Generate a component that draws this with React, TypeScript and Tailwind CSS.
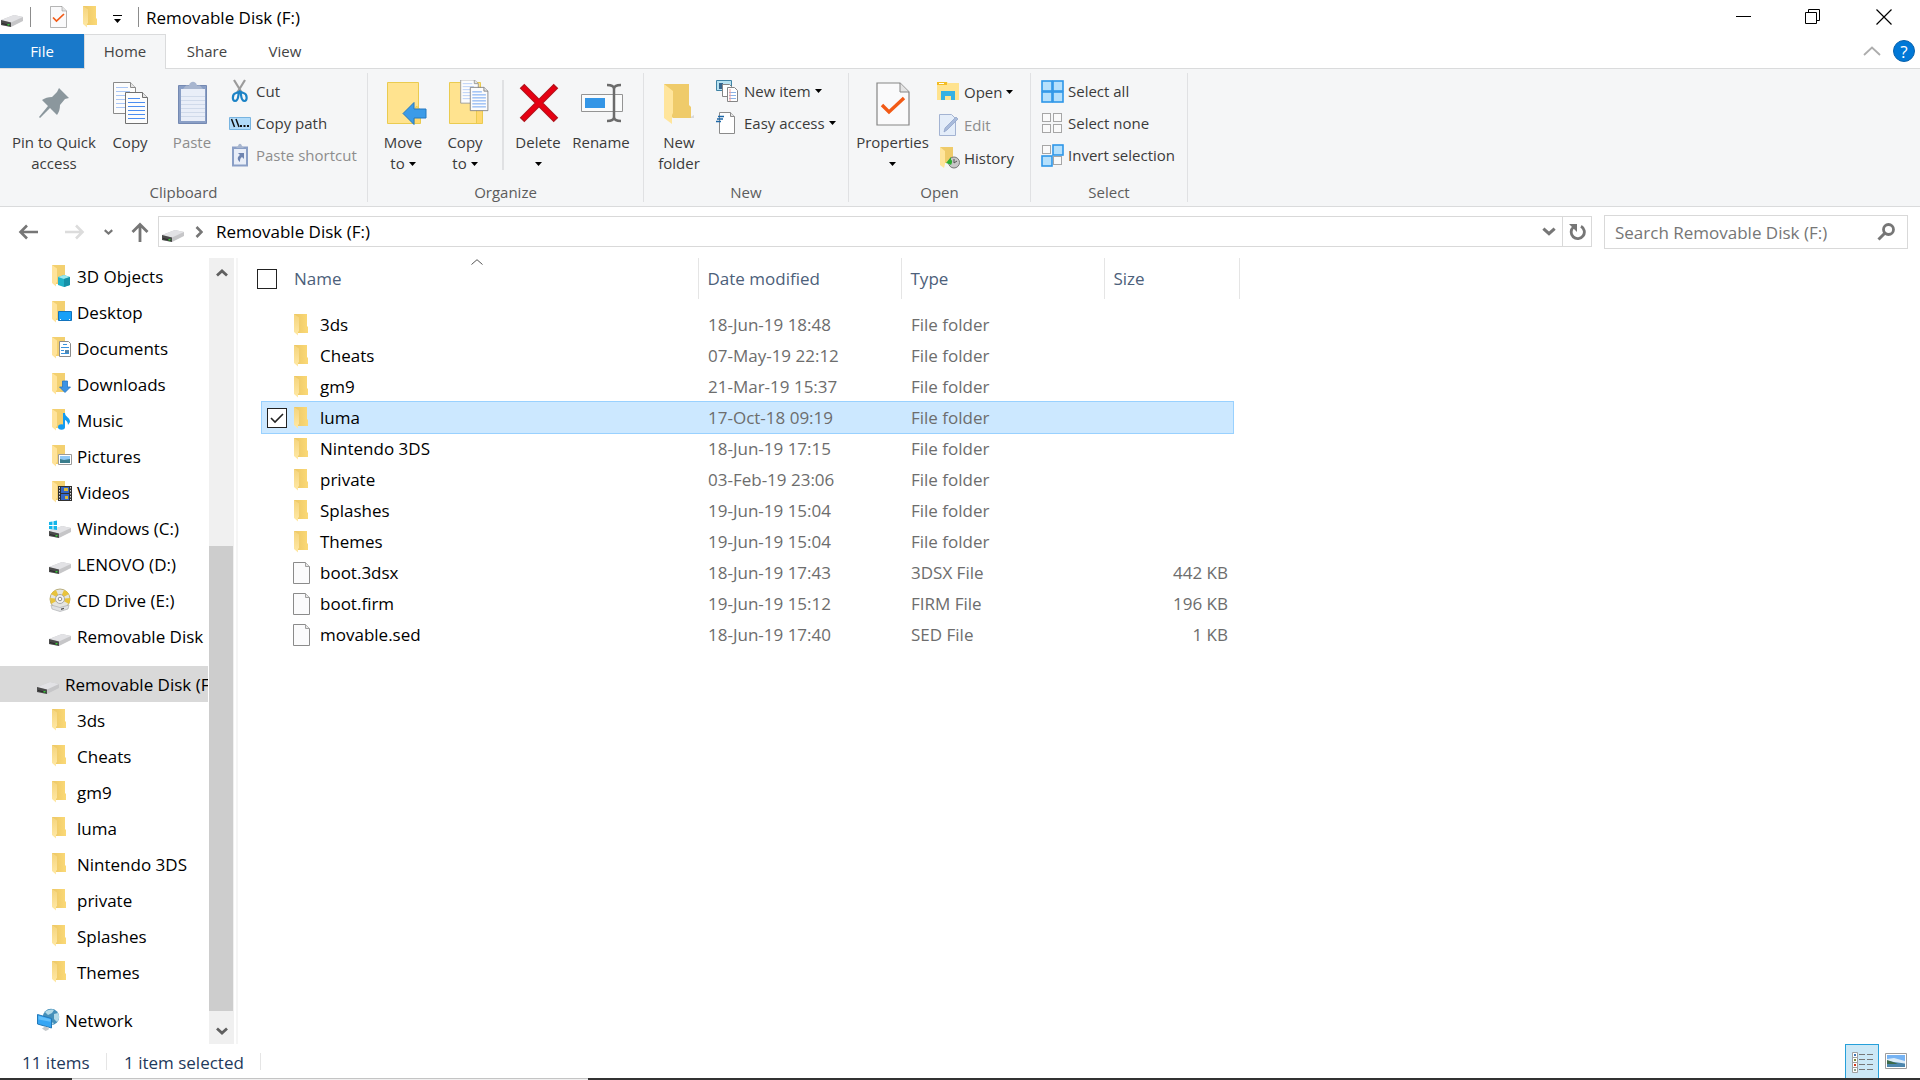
import type { ReactNode } from 'react';
import clsx from 'clsx';

type IconProps = { className?: string };

const FolderIcon = ({ className = 'h-[22px] w-4' }: IconProps) => (
  <svg viewBox="0 0 16 22" className={className} aria-hidden="true">
    <defs>
      <linearGradient id="folderBack" x1="0" x2="1">
        <stop offset="0" stopColor="#ecc765" />
        <stop offset="1" stopColor="#fbd977" />
      </linearGradient>
      <linearGradient id="folderFront" x1="0" x2="0" y1="0" y2="1">
        <stop offset="0" stopColor="#f5d47c" />
        <stop offset="1" stopColor="#ffe9a6" />
      </linearGradient>
    </defs>
    <path d="M1 0h13v12l1 1v6H5L1 15z" fill="url(#folderBack)" />
    <path d="M1 0l5 3.500V17l-1 1v3.500L1 18z" fill="url(#folderFront)" />
  </svg>
);

const FileIcon = ({ className = 'h-6 w-[18px]' }: IconProps) => (
  <svg viewBox="0 0 18 24" className={className} aria-hidden="true">
    <path d="M.5 1.500h12l4 4V22.500H.5z" fill="#fbfbfc" stroke="#8b8b8b" />
    <path d="M12.500 1.500v4h4" fill="#e6e6e6" stroke="#a0a0a0" />
  </svg>
);

const DriveShape = () => (
  <>
    <path d="M0 15l13-5 9 2v4l-12 6-10-2z" fill="#c6c6c8" />
    <path d="M0 15l13-5 9 2-12 5.500z" fill="#e2e2e5" />
    <path d="M0 15l10 2.500V22L0 20z" fill="#4a4a4a" />
    <path d="M1 18l8 2v1l-8-2z" fill="#2a2a2a" />
    <path d="M6.500 19h2v1.500h-2z" fill="#37c837" />
  </>
);

const DriveIcon = ({ className = 'size-6' }: IconProps) => (
  <svg viewBox="-1 0 24 24" className={className} aria-hidden="true">
    <DriveShape />
  </svg>
);

const WindowsDriveIcon = () => (
  <svg viewBox="-1 0 24 24" className="size-6" aria-hidden="true">
    <DriveShape />
    <path d="M0 6l3.500-.6V9H0zM4.500 5.200L8 4.600V9H4.500zM0 10h3.500v3.400L0 13zM4.500 10H8v4l-3.500-.5z" fill="#13b5ea" />
  </svg>
);

const CdIcon = () => (
  <svg viewBox="0 0 24 24" className="size-6" aria-hidden="true">
    <circle cx="12" cy="11" r="10" fill="#e4e4df" stroke="#b9ae7c" />
    <path d="M12 11L3 6a10 10 0 0 1 5-4zM12 11l9 5a10 10 0 0 0 1-6zM12 11l-9 5-1-6zM12 11l4-9a10 10 0 0 1 5 4z" fill="#e8c33c" />
    <circle cx="12" cy="11" r="4.500" fill="#f2f2f2" stroke="#a8a8a8" />
    <circle cx="12" cy="11" r="1.800" fill="#fff" stroke="#8d8d8d" />
    <path d="M3 17l9 2.500 9-2.500-1 4-8 2.500-8-2.500z" fill="#e0e1e3" stroke="#a5a6aa" strokeWidth=".6" />
    <path d="M13 20.500l3-.8v1.300l-3 .9z" fill="#555" />
  </svg>
);

const NetworkIcon = () => (
  <svg viewBox="0 0 24 24" className="size-6" aria-hidden="true">
    <circle cx="15" cy="9" r="8.200" fill="#4590ba" />
    <path d="M9 4c2-2 6-3 9-2l-2 3-4 2zM18 6l4-1c2 3 1 7-1 9l-3-3zM15 14l3 1-2 2z" fill="#b3dae8" />
    <path d="M1.500 6.500l14 4v9.500l-14-4z" fill="#36a6f4" stroke="#2379b8" />
    <path d="M2.500 8l12 3.300v2.500l-12-2.300z" fill="#62c0fb" />
    <path d="M6 20.500l3-2 4 1.200-.5 2-3 1.300z" fill="#c3c8cb" />
  </svg>
);

const overlays: Record<string, ReactNode> = {
  objects: (
    <>
      <path d="M7 12l6-2 6 2v8l-6 2-6-2z" fill="#21b2c8" />
      <path d="M7 12l6-2 6 2-6 2z" fill="#9be7ee" />
      <path d="M13 14l6-2v8l-6 2z" fill="#1590a8" />
    </>
  ),
  desktop: (
    <>
      <path d="M7.500 10.500h13v9h-13z" fill="#18a0f8" stroke="#1273bd" />
      <path d="M9 18.500h1M18 18.500h1" stroke="#fff" />
    </>
  ),
  documents: (
    <>
      <path d="M8.500 4.500h9l2 2v13h-11z" fill="#fff" stroke="#8b8b8b" />
      <path d="M12 7.500h4M10 10.500h8M10 13.500h3M10 16.500h8" stroke="#3b93dc" />
      <path d="M14 13h4v3h-4z" fill="#5487ad" />
    </>
  ),
  downloads: <path d="M11.500 8h5v6h3L14 19.500 8.500 14h3z" fill="#3b93e4" stroke="#2476c2" strokeWidth=".8" />,
  music: (
    <>
      <ellipse cx="10.500" cy="18" rx="3.500" ry="2.800" fill="#139cf0" />
      <path d="M12 4h2c0 4 5 4 5 9l-2 3c0-4-3-5-3-5v7h-2z" fill="#139cf0" />
    </>
  ),
  pictures: (
    <>
      <path d="M7.500 9.500h13v10h-13z" fill="#fff" stroke="#9a9a9a" />
      <path d="M9 11h10v4H9z" fill="#8fc7f5" />
      <path d="M9 18v-4l4 1 6-1v4z" fill="#3a7d8c" />
    </>
  ),
  videos: (
    <>
      <path d="M7 5h14v15H7z" fill="#303030" />
      <path d="M10 6h8v6h-8zM10 13h8v6h-8z" fill="#3465c4" />
      <path d="M13 7h4v3h-4zM14 15h3v3h-3z" fill="#d7b63c" />
      <path d="M8.500 6v13M19.500 6v13" stroke="#d8d8d8" strokeDasharray="1.500 1.500" />
    </>
  ),
};

const LibraryIcon = ({ kind }: { kind: string }) => (
  <svg viewBox="0 0 22 22" className="h-[22px] w-[22px]" aria-hidden="true">
    <path d="M1 0h13v19H5L1 15z" fill="#f3d070" />
    <path d="M1 0l5 3.500V17l-1 1v3.500L1 18z" fill="#ffe39a" />
    {overlays[kind]}
  </svg>
);

const PropertiesIcon = ({ className }: IconProps) => (
  <svg viewBox="0 0 34 44" className={className} aria-hidden="true">
    <path d="M1 1h23l9 9v33H1z" fill="#fafafb" stroke="#858585" strokeWidth="1.200" />
    <path d="M24 1v9h9" fill="#e4e4e4" stroke="#858585" />
    <path d="M6 23l7 7L28 16" fill="none" stroke="#f25a16" strokeWidth="3.400" />
  </svg>
);

const PinIcon = () => (
  <svg viewBox="0 0 48 48" className="size-12" aria-hidden="true">
    <path d="M29 8l10 10-4 1-5 6c0 4-1 7-3 10l-7-7L10 38l-1-1 9-11-6-6c3-2 6-3 10-3l5-5z" fill="#8b979d" />
  </svg>
);

const Pages = () => (
  <>
    <path d="M6.500 2.500h17l5 5V33.500h-22z" fill="#fcfcfc" stroke="#8a8a8a" />
    <path d="M23.500 2.500v5h5" fill="#e5e5e5" stroke="#8a8a8a" />
    <path d="M9 7.500h12M9 11.500h14M9 15.500h14M9 19.500h10M9 23.500h10M9 27.500h10" stroke="#a9c6f6" />
    <path d="M18.500 12.500h17l5 5V43.500h-22z" fill="#fcfcfc" stroke="#707070" />
    <path d="M35.500 12.500v5h5" fill="#e5e5e5" stroke="#707070" />
    <path d="M21 18.500h12M21 22.500h17M21 26.500h17M21 30.500h17M21 34.500h17M21 38.500h17" stroke="#4b8df0" />
  </>
);

const CopyIcon = () => (
  <svg viewBox="0 0 48 48" className="size-12" aria-hidden="true">
    <g transform="translate(1 0)">
      <Pages />
    </g>
  </svg>
);

const PasteIcon = () => (
  <svg viewBox="0 0 48 48" className="size-12" aria-hidden="true">
    <path d="M10.500 5.500h28v38h-28z" fill="#8a9fc6" stroke="#7489b2" />
    <path d="M13 9h24v32H13z" fill="#e9eef8" />
    <path d="M13 16.500h24M13 20.500h24M13 24.500h24M13 28.500h24M13 32.500h24M13 36.500h24" stroke="#d0daea" />
    <path d="M15 9l3-3.500h3c1-5 7-5 8 0h3l3 3.500z" fill="#a8b6cf" />
  </svg>
);

const CutIcon = () => (
  <svg viewBox="0 0 24 24" className="size-6" aria-hidden="true">
    <path d="M6 1l8 13M17 1L9 14" stroke="#9b9b9b" strokeWidth="2.200" />
    <path d="M11 13l-3 1c-4 1-4 8-1 8 4 0 3-6 4-9zM12.500 13l3 1c4 1 4 8 1 8-4 0-3-6-4-9z" fill="none" stroke="#1c83c6" strokeWidth="2.200" />
  </svg>
);

const CopyPathIcon = () => (
  <svg viewBox="0 0 24 24" className="size-6" aria-hidden="true">
    <path d="M1.500 6.500h21v12h-21z" fill="#b2dcfa" stroke="#78b4e0" />
    <path d="M3.500 8l3 8M8 8l3 8" stroke="#111" strokeWidth="1.500" />
    <path d="M12 14h2v2h-2zM15.500 14h2v2h-2zM19 14h2v2h-2z" fill="#111" />
  </svg>
);

const PasteShortcutIcon = () => (
  <svg viewBox="0 0 24 24" className="size-6" aria-hidden="true">
    <path d="M4 3.500h16v20H4z" fill="#8a9fc6" />
    <path d="M6 6h12v15.500H6z" fill="#e9eef8" />
    <path d="M8 5l2-2c1-3 3-3 4 0l2 2z" fill="#a8b6cf" />
    <path d="M10 10h6v6l-2-2c-2 1-2 3-2 5-3-2-3-5 0-7z" fill="#6e84b0" />
  </svg>
);

const LargeFolder = () => (
  <>
    <path d="M8.500 2.500h31v41h-31z" fill="#ffe38f" stroke="#eacb50" />
    <path d="M35.500 30l2-4 4 4v13.500h-6z" fill="#ffd86e" stroke="#eacb50" />
  </>
);

const MoveToIcon = () => (
  <svg viewBox="0 0 48 48" className="size-12" aria-hidden="true">
    <LargeFolder />
    <path d="M24 33.500L35 22.500v6.500h12v9H35v6.500z" fill="#3b9be8" stroke="#2579c0" />
  </svg>
);

const CopyToIcon = () => (
  <svg viewBox="0 0 48 48" className="size-12" aria-hidden="true">
    <LargeFolder />
    <g transform="translate(14.500 -2) scale(.8 .75)">
      <Pages />
    </g>
  </svg>
);

const DeleteIcon = () => (
  <svg viewBox="0 0 48 48" className="size-12" aria-hidden="true">
    <path d="M8 6l34 34M42 6L8 40" stroke="#b2121b" strokeWidth="6.500" />
    <path d="M9 7l32 32M41 7L9 39" stroke="#e60012" strokeWidth="4.500" />
  </svg>
);

const RenameIcon = () => (
  <svg viewBox="0 0 48 48" className="size-12" aria-hidden="true">
    <path d="M4.500 14.500h41v17h-41z" fill="#fafbfb" stroke="#949494" />
    <path d="M8 18h20v10H8z" fill="#3496e6" />
    <path d="M37 8v30M30 5c5 0 7 1 7 4 0-3 2-4 7-4M30 41c5 0 7-1 7-4 0 3 2 4 7 4" fill="none" stroke="#6b6b6b" strokeWidth="2.500" />
  </svg>
);

const NewFolderIcon = () => (
  <svg viewBox="0 0 48 48" className="size-12" aria-hidden="true">
    <path d="M34 38l5-3v3z" fill="#d9d9d9" />
    <path d="M9 4h25v21l2 2v11H18L9 30z" fill="#efcb6a" />
    <path d="M9 4l9 7v22l-1 2v9l-8-6z" fill="#ffe59c" />
  </svg>
);

const NewItemIcon = () => (
  <svg viewBox="0 0 24 24" className="size-6" aria-hidden="true">
    <path d="M.5 1.500h15v10H.5z" fill="#b7e2f1" stroke="#3f83a5" />
    <path d="M3 4h4v6H3z" fill="#35668e" />
    <path d="M6.500 5.500h7l2 2v10h-9z" fill="#fff" stroke="#858585" />
    <path d="M11.500 8.500h7l3 3v11h-10z" fill="#fff" stroke="#858585" />
    <path d="M13 13.500h7M13 16.500h7M13 19.500h7" stroke="#8cb2e6" />
    <path d="M14 10v12" stroke="#ef9b9b" />
  </svg>
);

const EasyAccessIcon = () => (
  <svg viewBox="0 0 24 24" className="size-6" aria-hidden="true">
    <path d="M3.500 1.500h11l4 4V22.500h-15z" fill="#fff" stroke="#8b8b8b" />
    <path d="M14.500 1.500v4h4" fill="#e4e4e4" stroke="#8b8b8b" />
    <path d="M2 5.500h6M1 8h6M0 10.500h5" stroke="#1d67a8" strokeWidth="1.300" />
  </svg>
);

const OpenIcon = () => (
  <svg viewBox="0 0 24 24" className="size-6" aria-hidden="true">
    <path d="M1 2h10l1 1h11v17H1z" fill="#ffe38f" />
    <path d="M1 2h10v3H1z" fill="#f4bd23" />
    <path d="M3 3.500h5" stroke="#fff" />
    <path d="M5 20v-9h14v9h-4v-4H9v4z" fill="#35b1e4" />
  </svg>
);

const EditIcon = () => (
  <svg viewBox="0 0 24 24" className="size-6" aria-hidden="true">
    <path d="M3.500 1.500h12l4 4V22.500h-16z" fill="#e4edf9" stroke="#a3b3d2" />
    <path d="M8 19l1-4L20 4l2 2L11 17z" fill="#a9bbdb" stroke="#8b9fc6" strokeWidth=".7" />
  </svg>
);

const HistoryIcon = () => (
  <svg viewBox="0 0 24 24" className="size-6" aria-hidden="true">
    <path d="M4 1h13v16H8z" fill="#efcb6a" />
    <path d="M4 1l5 4v13l-1 4-4-3z" fill="#ffe59c" />
    <circle cx="18" cy="16.500" r="5.500" fill="#c7c7c7" stroke="#777" />
    <path d="M18 13v4l3-2" fill="none" stroke="#555" />
    <path d="M10 17l5-6v3c2 0 1 3 0 5-1-1-2-1-2-1z" fill="#2fae34" />
  </svg>
);

// `filled` lists the squares of the 2x2 grid that are drawn as selected
const GridIcon = ({ filled }: { filled: number[] }) => (
  <svg viewBox="0 0 24 24" className="size-6" aria-hidden="true">
    {[0, 1, 2, 3].map((i) => {
      const on = filled.includes(i);
      const offset = on ? 2 : 2.5;
      return (
        <rect
          key={i}
          x={(i % 2 ? 11 : 0) + offset}
          y={(i > 1 ? 11 : 0) + offset}
          width={on ? 10 : 8}
          height={on ? 10 : 8}
          fill={on ? '#b5e0fc' : '#fafafa'}
          stroke={on ? '#2e96e8' : '#a6a6a6'}
          strokeWidth={on ? 1.6 : 1}
        />
      );
    })}
  </svg>
);

const Caret = () => (
  <svg viewBox="0 0 7 4" className="h-1 w-[7px] shrink-0" aria-hidden="true">
    <path d="M0 0h7L3.500 4z" fill="#000" />
  </svg>
);

const Chevron = ({ className }: IconProps) => (
  <svg viewBox="0 0 12 8" className={className} aria-hidden="true">
    <path d="M1 1.500l5 4.500 5-4.500" fill="none" stroke="currentColor" strokeWidth="2.800" />
  </svg>
);

type BigButtonProps = {
  icon: ReactNode;
  label: string;
  second?: string;
  caret?: boolean;
  disabled?: boolean;
  className: string;
};

const BigButton = ({ icon, label, second, caret, disabled, className }: BigButtonProps) => (
  <button
    type="button"
    disabled={disabled}
    className={clsx('flex shrink-0 flex-col items-center', disabled && 'text-[#8d8d8d]', className)}
  >
    {icon}
    <span className="mt-1 whitespace-nowrap">{label}</span>
    {(second || caret) && (
      <span className="flex h-[21px] items-center gap-1">
        {second}
        {caret && <Caret />}
      </span>
    )}
  </button>
);

type SmallButtonProps = { icon: ReactNode; label: string; caret?: boolean; disabled?: boolean };

const SmallButton = ({ icon, label, caret, disabled }: SmallButtonProps) => (
  <button
    type="button"
    disabled={disabled}
    className={clsx('flex h-8 items-center gap-1 whitespace-nowrap', disabled && 'text-[#8d8d8d]')}
  >
    {icon}
    <span>{label}</span>
    {caret && <Caret />}
  </button>
);

type GroupProps = { title: string; className: string; children: ReactNode };

const Group = ({ title, className, children }: GroupProps) => (
  <section
    aria-label={title}
    className={clsx('my-1 flex shrink-0 flex-col border-r border-[#e0e1e3]', className)}
  >
    <div className="flex flex-1 pl-1 pt-[7px]">{children}</div>
    <h2 className="-mb-px text-center leading-[21px] text-[#5c5c5c]">{title}</h2>
  </section>
);

const Ribbon = () => (
  <div className="flex h-[139px] overflow-hidden border-y border-[#dadbdc] bg-[#f5f6f7] text-[15px] leading-[21px] text-[#3b3b3b]">
    <Group title="Clipboard" className="w-[368px]">
      <BigButton icon={<PinIcon />} label="Pin to Quick" second="access" className="ml-1 w-[92px]" />
      <BigButton icon={<CopyIcon />} label="Copy" className="w-[60px]" />
      <BigButton icon={<PasteIcon />} label="Paste" disabled className="w-16" />
      <div className="-mt-[5px] flex flex-col pl-1">
        <SmallButton icon={<CutIcon />} label="Cut" />
        <SmallButton icon={<CopyPathIcon />} label="Copy path" />
        <SmallButton icon={<PasteShortcutIcon />} label="Paste shortcut" disabled />
      </div>
    </Group>
    <Group title="Organize" className="w-[276px]">
      <BigButton icon={<MoveToIcon />} label="Move" second="to" caret className="w-[62px]" />
      <BigButton icon={<CopyToIcon />} label="Copy" second="to" caret className="w-[62px]" />
      <div className="mx-1.5 h-[90px] w-0.5 bg-[#e0e1e3]" />
      <BigButton icon={<DeleteIcon />} label="Delete" caret className="w-[56px]" />
      <BigButton icon={<RenameIcon />} label="Rename" className="w-[70px]" />
    </Group>
    <Group title="New" className="w-[205px]">
      <BigButton icon={<NewFolderIcon />} label="New" second="folder" className="w-[62px]" />
      <div className="-mt-[5px] flex flex-col pl-1.5">
        <SmallButton icon={<NewItemIcon />} label="New item" caret />
        <SmallButton icon={<EasyAccessIcon />} label="Easy access" caret />
      </div>
    </Group>
    <Group title="Open" className="w-[182px]">
      <BigButton
        icon={<PropertiesIcon className="my-0.5 h-11 w-[34px]" />}
        label="Properties"
        caret
        className="w-[79px]"
      />
      <div className="-mt-1 flex flex-col gap-px pl-1">
        <SmallButton icon={<OpenIcon />} label="Open" caret />
        <SmallButton icon={<EditIcon />} label="Edit" disabled />
        <SmallButton icon={<HistoryIcon />} label="History" />
      </div>
    </Group>
    <Group title="Select" className="w-[157px]">
      <div className="-mt-[5px] flex flex-col pl-[5px]">
        <SmallButton icon={<GridIcon filled={[0, 1, 2, 3]} />} label="Select all" />
        <SmallButton icon={<GridIcon filled={[]} />} label="Select none" />
        <SmallButton icon={<GridIcon filled={[1, 2]} />} label="Invert selection" />
      </div>
    </Group>
  </div>
);

const TitleBar = () => (
  <header className="flex h-[34px] items-center">
    <DriveIcon />
    <div className="ml-1.5 h-5 w-px bg-[#8c8c8c]" />
    <button type="button" aria-label="Properties" className="ml-[19px]">
      <PropertiesIcon className="h-[22px] w-[17px]" />
    </button>
    <button type="button" aria-label="New folder" className="ml-[15px]">
      <FolderIcon />
    </button>
    <button type="button" aria-label="Customize Quick Access Toolbar" className="ml-[15px]">
      <svg viewBox="0 0 9 8" className="mt-1 h-2 w-[9px]">
        <path d="M0 0h9v1H0zM1 4h7L4.500 8z" fill="#000" />
      </svg>
    </button>
    <div className="ml-4 h-5 w-px bg-[#8c8c8c]" />
    <h1 className="ml-[7px] pt-px text-[17px]">Removable Disk (F:)</h1>
    <div className="ml-auto flex items-center gap-[53px] pr-7">
      <button type="button" aria-label="Minimize">
        <svg viewBox="0 0 16 16" className="size-4">
          <path d="M0 7.500h15" stroke="#000" />
        </svg>
      </button>
      <button type="button" aria-label="Restore">
        <svg viewBox="0 0 16 16" className="size-4">
          <path d="M.5 3.500h11v11H.5zM3.500 3.500v-3h11v11h-3" fill="none" stroke="#000" />
        </svg>
      </button>
      <button type="button" aria-label="Close" className="ml-0.5">
        <svg viewBox="0 0 16 16" className="size-4">
          <path d="M.5.5l15 15M15.500.5l-15 15" stroke="#000" strokeWidth="1.200" />
        </svg>
      </button>
    </div>
  </header>
);

const Tabs = () => (
  <nav className="-mb-px flex h-[35px] items-stretch text-[15px] text-[#444]">
    <button type="button" className="mb-px w-[84px] bg-[#1979ca] text-white">
      File
    </button>
    <button type="button" className="z-10 w-[82px] border border-b-0 border-[#dadbdc] bg-[#f5f6f7] pb-0.5">
      Home
    </button>
    <button type="button" className="w-[82px] pb-px">
      Share
    </button>
    <button type="button" className="w-[74px] pb-px">
      View
    </button>
    <div className="ml-auto flex items-center gap-3 pb-px pr-[5px]">
      <button type="button" aria-label="Minimize the Ribbon">
        <svg viewBox="0 0 18 10" className="h-2.5 w-[18px]">
          <path d="M1 9l8-7.500L17 9" fill="none" stroke="#adadad" strokeWidth="1.800" />
        </svg>
      </button>
      <button
        type="button"
        aria-label="Help"
        className="flex size-[22px] items-center justify-center rounded-full border border-[#0a62ac] bg-[#0078d7] text-[17px] leading-none text-white"
      >
        ?
      </button>
    </div>
  </nav>
);

const AddressRow = () => (
  <div className="flex h-[51px] items-start pt-2">
    <div className="flex h-[33px] w-[158px] shrink-0 items-center text-[#767676]">
      <button type="button" aria-label="Back" className="ml-[18px]">
        <svg viewBox="0 0 20 16" className="h-4 w-5">
          <path d="M9 1.500L2.500 8 9 14.500M2.500 8H20" fill="none" stroke="currentColor" strokeWidth="2.600" />
        </svg>
      </button>
      <button type="button" aria-label="Forward" disabled className="ml-[27px] text-[#dcdcdc]">
        <svg viewBox="0 0 20 16" className="h-4 w-5">
          <path d="M11 1.500L17.500 8 11 14.500M17.500 8H0" fill="none" stroke="currentColor" strokeWidth="2.600" />
        </svg>
      </button>
      <button type="button" aria-label="Recent locations" className="ml-[19px]">
        <Chevron className="h-1.5 w-[9px]" />
      </button>
      <button type="button" aria-label="Up" className="ml-[18px]">
        <svg viewBox="0 0 18 20" className="h-5 w-[18px]">
          <path d="M1.500 10L9 2.500 16.500 10M9 2.500V20" fill="none" stroke="currentColor" strokeWidth="2.800" />
        </svg>
      </button>
    </div>
    <div className="mt-px flex h-[31px] min-w-0 flex-1 items-center border border-[#d9d9d9] pl-0.5">
      <DriveIcon />
      <svg viewBox="0 0 8 12" className="ml-[10px] h-3 w-2" aria-hidden="true">
        <path d="M1.500 1l5 5-5 5" fill="none" stroke="#767676" strokeWidth="2.600" />
      </svg>
      <span className="ml-[13px] whitespace-nowrap text-[17px]">Removable Disk (F:)</span>
      <button type="button" aria-label="Previous locations" className="ml-auto px-1.5 text-[#767676]">
        <Chevron className="h-[9px] w-3.5" />
      </button>
      <button
        type="button"
        aria-label="Refresh"
        className="flex h-full w-[29px] items-center justify-center border-l border-[#d9d9d9]"
      >
        <svg viewBox="0 0 18 18" className="size-[18px]">
          <path d="M13 3.300A6.600 6.600 0 1 1 5.500 4" fill="none" stroke="#767676" strokeWidth="2.800" />
          <path d="M1 1h8v8z" fill="#767676" />
        </svg>
      </button>
    </div>
    <div className="ml-3 mr-3 flex h-[34px] w-[304px] shrink-0 items-center border border-[#d9d9d9] pl-2.5 pr-3">
      <input
        type="search"
        aria-label="Search Removable Disk (F:)"
        placeholder="Search Removable Disk (F:)"
        className="min-w-0 flex-1 pt-px text-[17px] outline-none placeholder:text-[#767676]"
      />
      <svg viewBox="0 0 18 18" className="size-[18px]" aria-hidden="true">
        <circle cx="11.500" cy="6.500" r="5" fill="none" stroke="#767676" strokeWidth="2.800" />
        <path d="M8 10l-6.500 6.500" stroke="#767676" strokeWidth="3" />
      </svg>
    </div>
  </div>
);

const thisPc = [
  { label: '3D Objects', kind: 'objects' },
  { label: 'Desktop', kind: 'desktop' },
  { label: 'Documents', kind: 'documents' },
  { label: 'Downloads', kind: 'downloads' },
  { label: 'Music', kind: 'music' },
  { label: 'Pictures', kind: 'pictures' },
  { label: 'Videos', kind: 'videos' },
];

const folders = ['3ds', 'Cheats', 'gm9', 'luma', 'Nintendo 3DS', 'private', 'Splashes', 'Themes'];

type NavItemProps = { icon: ReactNode; label: string; root?: boolean; selected?: boolean };

const NavItem = ({ icon, label, root, selected }: NavItemProps) => (
  <a
    href="#"
    className={clsx(
      'flex h-9 items-center overflow-hidden whitespace-nowrap',
      root ? 'pl-9' : 'pl-12',
      selected && 'bg-[#d9d9d9]'
    )}
  >
    <span className="flex w-[29px] shrink-0 items-center">{icon}</span>
    <span className="pt-0.5">{label}</span>
  </a>
);

// libraries and folders sit 3px further in than the drives
const Inset = ({ children }: { children: ReactNode }) => <span className="pl-[3px]">{children}</span>;

const Sidebar = () => (
  <aside className="flex w-[238px] shrink-0 border-r-2 border-[#f5f5f5]">
    <nav className="flex w-[208px] flex-col gap-3 overflow-hidden text-[17px]">
      <div>
        {thisPc.map(({ label, kind }) => (
          <NavItem
            key={label}
            label={label}
            icon={
              <Inset>
                <LibraryIcon kind={kind} />
              </Inset>
            }
          />
        ))}
        <NavItem icon={<WindowsDriveIcon />} label="Windows (C:)" />
        <NavItem icon={<DriveIcon />} label="LENOVO (D:)" />
        <NavItem icon={<CdIcon />} label="CD Drive (E:)" />
        <NavItem icon={<DriveIcon />} label="Removable Disk" />
      </div>
      <div>
        <NavItem icon={<DriveIcon />} label="Removable Disk (F:)" root selected />
        {folders.map((name) => (
          <NavItem
            key={name}
            label={name}
            icon={
              <Inset>
                <FolderIcon />
              </Inset>
            }
          />
        ))}
      </div>
      <NavItem icon={<NetworkIcon />} label="Network" root />
    </nav>
    <div className="ml-px flex w-[25px] flex-col items-center bg-[#f0f0f0] text-[#606060]">
      <button type="button" aria-label="Scroll up" className="flex h-[34px] shrink-0 items-center">
        <Chevron className="mb-1 h-2 w-3 rotate-180" />
      </button>
      <div className="flex-[254_1_0%]" />
      <div className="w-6 flex-[465_1_0%] self-start bg-[#cdcdcd]" />
      <button type="button" aria-label="Scroll down" className="flex h-[33px] shrink-0 items-center">
        <Chevron className="mt-1.5 h-2 w-3" />
      </button>
    </div>
  </aside>
);

const files = [
  { name: '3ds', date: '18-Jun-19 18:48', type: 'File folder', size: '' },
  { name: 'Cheats', date: '07-May-19 22:12', type: 'File folder', size: '' },
  { name: 'gm9', date: '21-Mar-19 15:37', type: 'File folder', size: '' },
  { name: 'luma', date: '17-Oct-18 09:19', type: 'File folder', size: '', selected: true },
  { name: 'Nintendo 3DS', date: '18-Jun-19 17:15', type: 'File folder', size: '' },
  { name: 'private', date: '03-Feb-19 23:06', type: 'File folder', size: '' },
  { name: 'Splashes', date: '19-Jun-19 15:04', type: 'File folder', size: '' },
  { name: 'Themes', date: '19-Jun-19 15:04', type: 'File folder', size: '' },
  { name: 'boot.3dsx', date: '18-Jun-19 17:43', type: '3DSX File', size: '442 KB' },
  { name: 'boot.firm', date: '19-Jun-19 15:12', type: 'FIRM File', size: '196 KB' },
  { name: 'movable.sed', date: '18-Jun-19 17:40', type: 'SED File', size: '1 KB' },
];

const CHECKBOX =
  'size-5 shrink-0 appearance-none border border-[#222] bg-white checked:bg-white';

const FileTable = () => (
  <table className="ml-[19px] w-[982px] table-fixed border-collapse text-left text-[17px] leading-[30px]">
    <colgroup>
      <col className="w-[441px]" />
      <col className="w-[203px]" />
      <col className="w-[203px]" />
      <col className="w-[135px]" />
    </colgroup>
    <thead className="text-[#4c607a]">
      <tr className="h-[41px]">
        <th className="relative border-r border-[#e5e5e5] p-0 font-normal">
          <div className="flex items-center">
            <input type="checkbox" aria-label="Select all items" className={CHECKBOX} />
            <span className="ml-[17px] pt-px">Name</span>
          </div>
          <svg viewBox="0 0 12 6" className="absolute left-1/2 top-px h-1.5 w-3 -translate-x-1/2" aria-hidden="true">
            <path d="M.5 5.500L6 .7l5.500 4.800" fill="none" stroke="#555" />
          </svg>
        </th>
        <th className="border-r border-[#e5e5e5] p-0 pl-[9px] pt-px font-normal">Date modified</th>
        <th className="border-r border-[#e5e5e5] p-0 pl-[9px] pt-px font-normal">Type</th>
        <th className="border-r border-[#e5e5e5] p-0 pl-[9px] pt-px font-normal">Size</th>
      </tr>
    </thead>
    <tbody className="text-[#6d6d6d]">
      <tr className="h-2.5" />
      {files.map(({ name, date, type, size, selected }) => {
        const cell = clsx(
          'flex items-center whitespace-nowrap border-[#99d1ff]',
          selected ? '-my-px h-[33px] border-y bg-[#cce8ff]' : 'h-[31px]'
        );
        return (
          <tr key={name} className="h-[31px]">
            <td className="p-0 pl-1">
              <div className={clsx(cell, selected && 'border-l', 'text-black')}>
                <span className={clsx('relative flex shrink-0', selected ? 'w-[31px] pl-[5px]' : 'w-8')}>
                  {selected && (
                    <>
                      <input type="checkbox" aria-label={name} defaultChecked className={CHECKBOX} />
                      <svg viewBox="0 0 20 20" className="pointer-events-none absolute size-5" aria-hidden="true">
                        <path d="M4 10l4 4 8-8" fill="none" stroke="#222" strokeWidth="1.600" />
                      </svg>
                    </>
                  )}
                </span>
                <span className="w-[27px] shrink-0">
                  {type === 'File folder' ? <FolderIcon /> : <FileIcon />}
                </span>
                <span className="pt-px">{name}</span>
              </div>
            </td>
            <td className="p-0">
              <div className={clsx(cell, 'pl-2.5 pt-px')}>{date}</div>
            </td>
            <td className="p-0">
              <div className={clsx(cell, 'pl-2.5 pt-px')}>{type}</div>
            </td>
            <td className="p-0 pr-[5px]">
              <div className={clsx(cell, selected && 'border-r', 'justify-end pr-1.5 pt-px')}>{size}</div>
            </td>
          </tr>
        );
      })}
    </tbody>
  </table>
);

const StatusBar = () => (
  <footer className="flex h-[34px] items-center text-[17px] text-[#1e395b]">
    <span className="w-[84px] whitespace-nowrap pl-[22px] pt-[3px]">11 items</span>
    <div className="ml-[22px] h-[17px] w-px bg-[#e5e5e5]" />
    <span className="ml-[17px] whitespace-nowrap pt-[3px]">1 item selected</span>
    <div className="ml-4 h-[17px] w-px bg-[#e5e5e5]" />
    <div className="ml-auto flex h-full items-center gap-1.5 pr-[13px]">
      <button
        type="button"
        aria-label="Details view"
        className="flex h-full w-[34px] items-center justify-center border border-b-0 border-[#26a0da] bg-[#cce8f6] pl-0.5"
      >
        <svg viewBox="0 0 22 22" className="size-[22px]">
          <path d="M.5 1.500h5v5h-5zM.5 6.500h5v5h-5zM.5 11.500h5v5h-5zM.5 16.500h5v5h-5z" fill="#fff" stroke="#a0a0a0" />
          <path d="M2 3h2v2H2z" fill="#3e78b5" />
          <path d="M2 8h2v2H2z" fill="#7a8a3c" />
          <path d="M2 13h2v2H2z" fill="#d13a1c" />
          <path d="M2 18h2v2H2z" fill="#8aa08a" />
          <path d="M7 3.500h6M15 3.500h6M7 8.500h6M15 8.500h6M7 13.500h6M15 13.500h6M7 18.500h6M15 18.500h6" stroke="#777" />
        </svg>
      </button>
      <button type="button" aria-label="Large icons view">
        <svg viewBox="0 0 22 16" className="h-4 w-[22px]">
          <path d="M.5.5h21v15H.5z" fill="#fff" stroke="#9c9c9c" />
          <path d="M2 2h18v6H2z" fill="#76b3f3" />
          <path d="M2 6l7-1 11 3v2H2z" fill="#dcecf8" />
          <path d="M2 8l7 1 11 1.500V14H2z" fill="#4c86ad" />
          <path d="M2 7l6 2 5 2H2z" fill="#3c6a4a" />
        </svg>
      </button>
    </div>
  </footer>
);

const App = () => {
  return (
    <div className="flex min-h-screen flex-col overflow-hidden bg-white font-['Open_Sans','Noto_Sans',sans-serif] text-black">
      <TitleBar />
      <Tabs />
      <Ribbon />
      <AddressRow />
      <main className="flex flex-1">
        <Sidebar />
        <div className="min-w-0 flex-1">
          <FileTable />
        </div>
      </main>
      <StatusBar />
      <div className="flex h-0.5 bg-[#333]">
        <div className="ml-[72px] w-[516px] border-t border-[#c4c4c4] bg-[#f0f0f0]" />
      </div>
    </div>
  );
};

export default App;
